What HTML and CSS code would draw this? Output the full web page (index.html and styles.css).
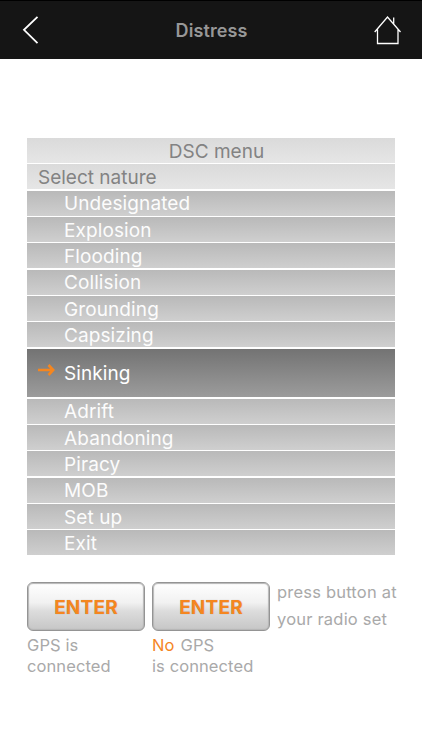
FILE: index.html
```html
<!DOCTYPE html>
<html lang="en">
<head>
    <meta charset="UTF-8">
    <meta name="viewport" content="width=device-width, initial-scale=1.0">
    <title>Distress</title>
    <link rel="stylesheet" href="styles.css">
</head>
<body>
    <header class="topbar">
        <a class="nav-btn" aria-label="Back">
            <svg width="18" height="30" viewBox="0 0 18 30" fill="none" stroke="#fff" stroke-width="1.8"><path d="M15.5 0.8 L2 13.8 L15.5 27.1"/></svg>
        </a>
        <h1>Distress</h1>
        <a class="nav-btn" aria-label="Home">
            <svg width="28" height="30" viewBox="0 0 28 30" fill="none" stroke="#fff" stroke-width="1.3"><path d="M0.7 16 L13.5 1 L26.5 16 M3.5 13.5 V27.5 H24 V13.5 M19.7 8 V1.5"/></svg>
        </a>
    </header>

    <main>
        <ul class="menu">
            <li class="head title">DSC menu</li>
            <li class="head">Select nature</li>
            <li>Undesignated</li>
            <li>Explosion</li>
            <li>Flooding</li>
            <li>Collision</li>
            <li>Grounding</li>
            <li>Capsizing</li>
            <li class="active">
                <svg class="arrow" width="17" height="14" viewBox="0 0 17 14" fill="none" stroke="#f5861f" stroke-width="2.6"><path d="M0 7 H15 M10.5 2 L15.2 7 L10.5 12"/></svg>
                Sinking
            </li>
            <li>Adrift</li>
            <li>Abandoning</li>
            <li>Piracy</li>
            <li>MOB</li>
            <li>Set up</li>
            <li>Exit</li>
        </ul>

        <div class="actions">
            <div class="action">
                <button type="button">ENTER</button>
                <p>GPS is<br>connected</p>
            </div>
            <div class="action">
                <button type="button">ENTER</button>
                <p><span class="no">No</span>GPS<br>is connected</p>
            </div>
            <p class="hint">press button at<br>your radio set</p>
        </div>
    </main>
</body>
</html>
```
FILE: styles.css
```css
* {
    box-sizing: border-box;
}
body {
    margin: 0;
    background: #fff;
    font-family: Inter, "Liberation Sans", sans-serif;
}
.topbar {
    display: flex;
    justify-content: space-between;
    align-items: center;
    height: 59px;
    padding: 2px 20px 0 22px;
    background: #151515;
    border-top: 1px solid #000;
}
.topbar h1 {
    margin: -2px 0 0 9px;
    font-size: 18px;
    font-weight: 600;
    letter-spacing: 0.1px;
    color: #979797;
}
.nav-btn, .nav-btn svg {
    display: block;
}
main {
    padding: 79px 27px 0;
}
.menu {
    display: flex;
    flex-direction: column;
    gap: 1.35px;
    margin: 0;
    padding: 0;
    list-style: none;
    font-size: 19px;
}
.menu li {
    display: flex;
    align-items: center;
    height: 25px;
    padding: 1px 0 0 37px;
    color: #fcfcfc;
    font-weight: 400;
    letter-spacing: 0.1px;
    background: linear-gradient(#b9b9b9, #cfcfcf);
}
.menu .head {
    padding-left: 11px;
    color: #838383;
    letter-spacing: 0;
    background: linear-gradient(#dadada, #e6e6e6);
}
.menu .title {
    justify-content: center;
}
.menu .active {
    height: 48.6px;
    padding-left: 11px;
    color: #fff;
    background: linear-gradient(#737373, #9c9c9c);
}
.arrow {
    margin: -8px 9px 0 0;
}
.actions {
    display: flex;
    align-items: flex-start;
    gap: 7px;
    margin-top: 26.6px;
}
.action {
    width: 118px;
}
.action button {
    width: 118px;
    height: 49px;
    padding: 2px 0 0;
    border: 1px solid #949494;
    border-radius: 6px;
    background: linear-gradient(#fff, #f1f1f1 42%, #dcdcdc 60%, #c6c6c6);
    box-shadow: inset 0 0 1px 1px #b5b5b5;
    color: #f5861f;
    font: 700 19px Inter, sans-serif;
    letter-spacing: 0.2px;
    text-shadow: 0 0 1px rgba(0, 0, 0, 0.25);
}
.action p {
    margin: 4px 0 0;
    font-size: 16.5px;
    line-height: 20.5px;
    letter-spacing: 0.1px;
    color: #a9a9a9;
    white-space: nowrap;
}
.no {
    margin-right: 6px;
    color: #f5861f;
}
.hint {
    margin: -3px 0 0;
    font-size: 16.5px;
    line-height: 26.5px;
    letter-spacing: 0.2px;
    color: #a9a9a9;
    white-space: nowrap;
}
```
